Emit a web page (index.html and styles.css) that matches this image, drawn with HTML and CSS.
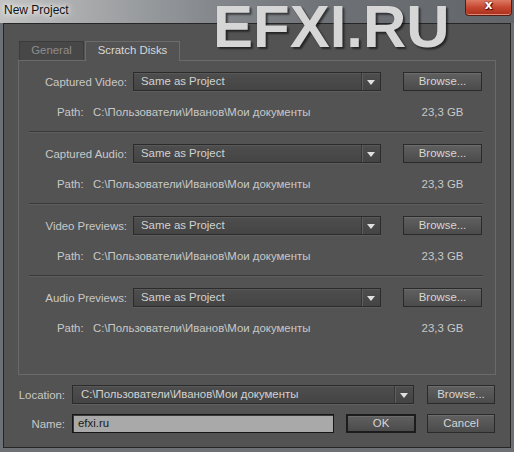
FILE: index.html
```html
<!DOCTYPE html>
<html lang="ru">
<head>
<meta charset="utf-8">
<title>New Project</title>
<link rel="stylesheet" href="styles.css">
</head>
<body>
<div class="window">
  <div class="titlebar">
    <span class="title">New Project</span>
    <div class="close">x</div>
  </div>
  <div class="watermark">EFXI.RU</div>
  <div class="client">
    <div class="tabs">
      <div class="tab">General</div>
      <div class="tab active">Scratch Disks</div>
    </div>
    <div class="panel">
      <section class="sect">
        <div class="row">
          <span class="lbl">Captured Video:</span>
          <div class="select"><span class="val">Same as Project</span><span class="dd"><i class="arrow"></i></span></div>
          <div class="btn">Browse...</div>
        </div>
        <div class="pathrow"><span class="plbl">Path:</span><span class="ptxt">C:\Пользователи\Иванов\Мои документы</span><span class="size">23,3 GB</span></div>
      </section>
      <div class="sep"></div>
      <section class="sect">
        <div class="row">
          <span class="lbl">Captured Audio:</span>
          <div class="select"><span class="val">Same as Project</span><span class="dd"><i class="arrow"></i></span></div>
          <div class="btn">Browse...</div>
        </div>
        <div class="pathrow"><span class="plbl">Path:</span><span class="ptxt">C:\Пользователи\Иванов\Мои документы</span><span class="size">23,3 GB</span></div>
      </section>
      <div class="sep"></div>
      <section class="sect">
        <div class="row">
          <span class="lbl">Video Previews:</span>
          <div class="select"><span class="val">Same as Project</span><span class="dd"><i class="arrow"></i></span></div>
          <div class="btn">Browse...</div>
        </div>
        <div class="pathrow"><span class="plbl">Path:</span><span class="ptxt">C:\Пользователи\Иванов\Мои документы</span><span class="size">23,3 GB</span></div>
      </section>
      <div class="sep"></div>
      <section class="sect">
        <div class="row">
          <span class="lbl">Audio Previews:</span>
          <div class="select"><span class="val">Same as Project</span><span class="dd"><i class="arrow"></i></span></div>
          <div class="btn">Browse...</div>
        </div>
        <div class="pathrow"><span class="plbl">Path:</span><span class="ptxt">C:\Пользователи\Иванов\Мои документы</span><span class="size">23,3 GB</span></div>
      </section>
    </div>
    <div class="bottom">
      <div class="brow">
        <span class="blbl">Location:</span>
        <div class="select loc"><span class="val">C:\Пользователи\Иванов\Мои документы</span><span class="dd"><i class="arrow"></i></span></div>
        <div class="btn bbrowse">Browse...</div>
      </div>
      <div class="brow second">
        <span class="blbl">Name:</span>
        <div class="input">efxi.ru</div>
        <div class="btn ok">OK</div>
        <div class="btn cancel">Cancel</div>
      </div>
    </div>
  </div>
</div>
</body>
</html>
```
FILE: styles.css
```css
html, body {
  margin: 0;
  padding: 0;
}
body {
  width: 514px;
  height: 452px;
  overflow: hidden;
  font-family: "Liberation Sans", Arial, sans-serif;
  font-size: 11.4px;
  color: #c8c8c8;
}
.window {
  position: relative;
  width: 514px;
  height: 452px;
  background: #6d7175;
  display: flex;
  flex-direction: column;
}
.titlebar {
  height: 23px;
  flex: none;
  display: flex;
  align-items: flex-start;
  background: linear-gradient(90deg, #c2c2c2 0%, #a6a8aa 18%, #868a8e 40%, #6d7176 65%, #62666b 100%);
}
.title {
  font-size: 12px;
  line-height: 15px;
  padding: 3px 0 0 4px;
  color: #111;
  text-shadow: 0 0 5px #fff, 0 0 9px #fff;
}
.close {
  margin-left: auto;
  margin-right: 2px;
  width: 47px;
  height: 16px;
  box-sizing: border-box;
  border: 1px solid #5a1a12;
  border-top: none;
  border-radius: 0 0 4px 4px;
  background: linear-gradient(#dc7a64, #c6472f 50%, #a9301d);
  box-shadow: inset 0 -1px 0 #e08a78;
  color: #fff;
  font: bold 12px "DejaVu Sans", sans-serif;
  line-height: 11px;
  text-align: center;
  text-shadow: 0 0 2px #400, 1px 1px 1px #400;
}
.watermark {
  position: absolute;
  left: 213px;
  top: 0;
  font: bold 60px/54px "Liberation Sans", Arial, sans-serif;
  color: #d6d6d6;
  text-shadow: 2px 2px 2px rgba(0, 0, 0, 0.55), 0 0 1px rgba(0,0,0,.3);
  pointer-events: none;
}
.client {
  flex: 1;
  margin: 0 3px 4px 3px;
  border: 1px solid #262626;
  background: #535353;
  padding: 17px 14px 0 14px;
}
.tabs {
  display: flex;
  align-items: flex-end;
  gap: 1px;
  padding-left: 1px;
  height: 19px;
  position: relative;
  z-index: 1;
}
.tab {
  box-sizing: border-box;
  height: 19px;
  width: 65px;
  text-align: center;
  line-height: 17px;
  background: #474747;
  border: 1px solid #3c3c3c;
  border-bottom: none;
  color: #8e8e8e;
}
.tab.active {
  width: 95px;
  height: 20px;
  margin-bottom: -1px;
  background: #535353;
  border-color: #6c6c6c;
  color: #d8d8d8;
}
.panel {
  box-sizing: border-box;
  height: 315px;
  border: 1px solid #6a6a6a;
}
.sect {
  padding: 11px 0 12px;
}
.row {
  display: flex;
  align-items: center;
  height: 19px;
}
.lbl {
  width: 108px;
  margin-right: 6px;
  text-align: right;
  white-space: nowrap;
}
.select {
  box-sizing: border-box;
  width: 248px;
  height: 19px;
  margin-right: 22px;
  display: flex;
  align-items: stretch;
  border: 1px solid #2b2b2b;
  background: linear-gradient(#4e4e4e, #444444);
  box-shadow: inset 0 1px 0 #585858, 0 1px 0 #5e5e5e;
  color: #d2d2d2;
}
.select .val {
  flex: 1;
  padding-left: 7px;
  line-height: 17px;
  white-space: nowrap;
  overflow: hidden;
}
.select .dd {
  width: 18px;
  border-left: 1px solid #383838;
  box-shadow: inset 1px 0 0 #5e5e5e;
  display: flex;
  align-items: center;
  justify-content: center;
}
.arrow {
  width: 0;
  height: 0;
  border-left: 4px solid transparent;
  border-right: 4px solid transparent;
  border-top: 5px solid #e0e0e0;
  margin-top: 1px;
}
.btn {
  box-sizing: border-box;
  width: 79px;
  height: 19px;
  border: 1px solid #2a2a2a;
  background: linear-gradient(#606060, #4b4b4b);
  box-shadow: inset 0 1px 0 #6c6c6c;
  color: #d6d6d6;
  text-align: center;
  line-height: 17px;
}
.pathrow {
  display: flex;
  margin-top: 14px;
  line-height: 14px;
  height: 14px;
  white-space: nowrap;
}
.plbl {
  margin-left: 38px;
  width: 36px;
}
.ptxt {
  width: 310px;
}
.size {
  width: 79px;
  text-align: center;
}
.sep {
  height: 1px;
  background: #3a3a3a;
  border-bottom: 1px solid #5c5c5c;
  margin: 0 12px 0 10px;
}
.bottom {
  padding-top: 10px;
}
.brow {
  display: flex;
  align-items: center;
  height: 19px;
}
.brow.second {
  margin-top: 10px;
}
.blbl {
  width: 47px;
  margin-right: 7px;
  text-align: right;
  white-space: nowrap;
}
.select.loc {
  width: 342px;
  margin-right: 13px;
}
.select.loc .val {
  padding-left: 8px;
}
.bbrowse {
  width: 68px;
}
.input {
  box-sizing: border-box;
  width: 262px;
  height: 19px;
  margin-right: 12px;
  background: #a9a9a9;
  border: 1px solid #161616;
  box-shadow: inset 1px 1px 0 #3a3a3a;
  color: #1a1a1a;
  padding-left: 5px;
  line-height: 17px;
}
.ok {
  width: 70px;
  margin-right: 11px;
  border: 2px solid #1c1c1c;
  line-height: 15px;
}
.cancel {
  width: 68px;
}
```
